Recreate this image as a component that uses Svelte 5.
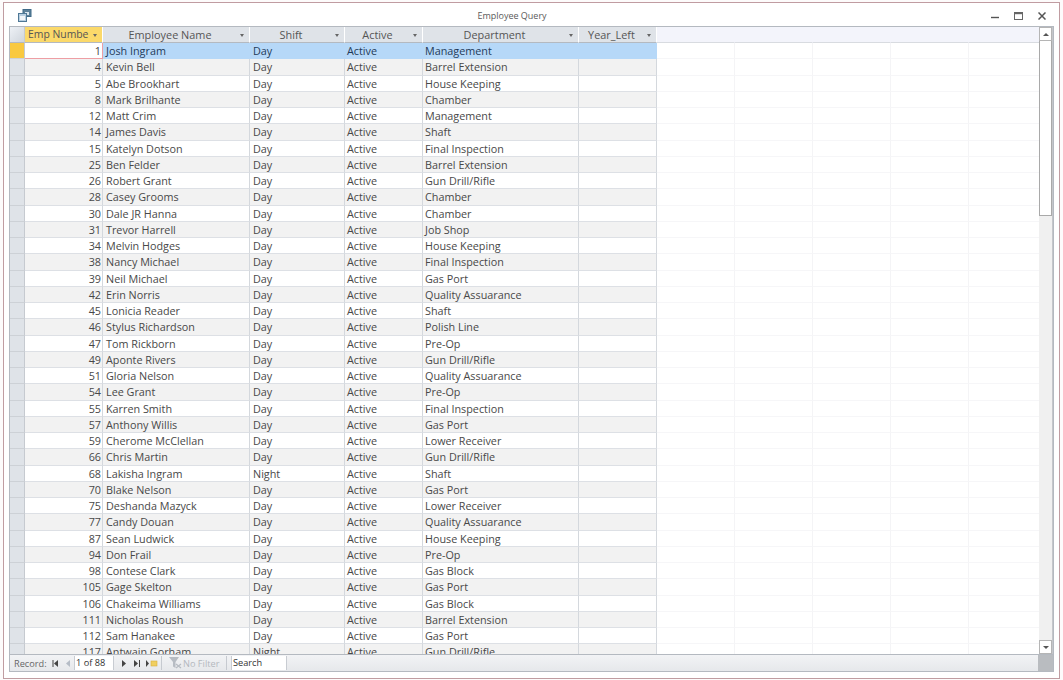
<script>
  const raw = `1|Josh Ingram|Day|Management
4|Kevin Bell|Day|Barrel Extension
5|Abe Brookhart|Day|House Keeping
8|Mark Brilhante|Day|Chamber
12|Matt Crim|Day|Management
14|James Davis|Day|Shaft
15|Katelyn Dotson|Day|Final Inspection
25|Ben Felder|Day|Barrel Extension
26|Robert Grant|Day|Gun Drill/Rifle
28|Casey Grooms|Day|Chamber
30|Dale JR Hanna|Day|Chamber
31|Trevor Harrell|Day|Job Shop
34|Melvin Hodges|Day|House Keeping
38|Nancy Michael|Day|Final Inspection
39|Neil Michael|Day|Gas Port
42|Erin Norris|Day|Quality Assuarance
45|Lonicia Reader|Day|Shaft
46|Stylus Richardson|Day|Polish Line
47|Tom Rickborn|Day|Pre-Op
49|Aponte Rivers|Day|Gun Drill/Rifle
51|Gloria Nelson|Day|Quality Assuarance
54|Lee Grant|Day|Pre-Op
55|Karren Smith|Day|Final Inspection
57|Anthony Willis|Day|Gas Port
59|Cherome McClellan|Day|Lower Receiver
66|Chris Martin|Day|Gun Drill/Rifle
68|Lakisha Ingram|Night|Shaft
70|Blake Nelson|Day|Gas Port
75|Deshanda Mazyck|Day|Lower Receiver
77|Candy Douan|Day|Quality Assuarance
87|Sean Ludwick|Day|House Keeping
94|Don Frail|Day|Pre-Op
98|Contese Clark|Day|Gas Block
105|Gage Skelton|Day|Gas Port
106|Chakeima Williams|Day|Gas Block
111|Nicholas Roush|Day|Barrel Extension
112|Sam Hanakee|Day|Gas Port
117|Antwain Gorham|Night|Gun Drill/Rifle`;
  const rows = raw.split("\n").map((l) => l.split("|"));
  const heads = ["Employee Name", "Shift", "Active", "Department"];
  const blanks = [0, 1, 2, 3, 4];
</script>

<div class="page">
  <div class="window">
    <div class="titlebar">
      <svg class="appicon" width="14" height="13" viewBox="0 0 14 13">
        <rect x="5" y="0.5" width="8" height="7" fill="#5d8199" stroke="#3f6a88" />
        <rect x="7" y="3" width="4" height="3" fill="#d9e4ec" />
        <rect x="0.5" y="4.5" width="8" height="8" fill="#b9cfe0" stroke="#4f7896" />
        <rect x="2" y="7" width="5" height="4" fill="#f2f6f9" />
      </svg>
      <span class="title">Employee Query</span>
      <div class="controls">
        <svg width="8" height="8" viewBox="0 0 8 8"><path d="M0 5.5h8" stroke="#555" stroke-width="1.4" /></svg>
        <svg width="9" height="8" viewBox="0 0 9 8"><rect x="0.5" y="0.5" width="8" height="7" fill="none" stroke="#666" /><path d="M0 1.5h9" stroke="#666" stroke-width="1.4" /></svg>
        <svg width="8" height="8" viewBox="0 0 8 8"><path d="M0.5 0.5l7 7M7.5 0.5l-7 7" stroke="#555" stroke-width="1.5" /></svg>
      </div>
    </div>

    <div class="body">
      <div class="sheet">
        <div class="grid">
          <div class="row head">
            <div class="sel corner"></div>
            <div class="c c0 active">Emp Numbe<i class="arrow"></i></div>
            {#each heads as h, i}
              <div class="c c{i + 1}"><span>{h}</span><i class="arrow"></i></div>
            {/each}
            <div class="c c5"><span>Year_Left</span><i class="arrow"></i></div>
            {#each blanks as b}<div class="blank"></div>{/each}
          </div>
          {#each rows as r, i}
            <div class="row" class:alt={i % 2 === 1} class:current={i === 0}>
              <div class="sel"></div>
              <div class="c c0 num">{r[0]}</div>
              <div class="c c1">{r[1]}</div>
              <div class="c c2">{r[2]}</div>
              <div class="c c3">Active</div>
              <div class="c c4">{r[3]}</div>
              <div class="c c5"></div>
              {#each blanks as b}<div class="blank"></div>{/each}
            </div>
          {/each}
        </div>
        <div class="scrollbar">
          <div class="sbtn"><i class="up"></i></div>
          <div class="thumb"></div>
          <div class="track"></div>
          <div class="sbtn"><i class="down"></i></div>
        </div>
      </div>
      <div class="nav">
        <span class="lbl">Record:</span>
        <svg class="nv first" width="7" height="7" viewBox="0 0 7 7"><path d="M6 0v7L2 3.5z" fill="#444" /><path d="M1 0v7" stroke="#444" /></svg>
        <svg class="nv prev" width="5" height="7" viewBox="0 0 5 7"><path d="M4 0v7L0 3.5z" fill="#b5bcc6" /></svg>
        <span class="pos">1 of 88</span>
        <svg class="nv next" width="5" height="7" viewBox="0 0 5 7"><path d="M0 0v7l4-3.5z" fill="#444" /></svg>
        <svg class="nv last" width="7" height="7" viewBox="0 0 7 7"><path d="M0 0v7l4-3.5z" fill="#444" /><path d="M5.5 0v7" stroke="#444" /></svg>
        <svg class="nv new" width="12" height="7" viewBox="0 0 12 7"><path d="M0 0v7l3-3.5z" fill="#444" /><rect x="5" y="1" width="6" height="5" fill="#f0cf60" stroke="#d8b040" stroke-width="0.6" /></svg>
        <span class="sep"></span>
        <svg class="funnel" width="15" height="12" viewBox="0 0 15 12"><path d="M1 0h10L7.5 5v6L5 9.5V5z" fill="#b7bcc3" /><path d="M8 7l5 4M13 7l-5 4" stroke="#b7bcc3" stroke-width="1.3" /></svg>
        <span class="nofilter">No Filter</span>
        <span class="sep s2"></span>
        <span class="search">Search</span>
      </div>
    </div>
  </div>
</div>

<style>
  :global(body) {
    margin: 0;
    background: #fff;
  }
  .page {
    width: 1063px;
    height: 680px;
    padding: 2px 3px 1px 3px;
    box-sizing: border-box;
    background: #fdfbfb;
    font-family: "Open Sans", "Noto Sans", sans-serif;
    font-size: 10.8px;
    color: #484848;
    overflow: hidden;
  }
  .window {
    height: 100%;
    box-sizing: border-box;
    border: 1px solid #c09ca1;
    background: #fff;
    display: flex;
    flex-direction: column;
  }
  .titlebar {
    height: 23px;
    flex: none;
    display: flex;
    align-items: center;
    position: relative;
    padding: 0 13px 0 14px;
  }
  .appicon {
    margin-top: 1px;
  }
  .title {
    position: absolute;
    left: 472px;
    width: 72px;
    text-align: center;
    font-size: 9px;
    color: #5a5a5a;
    white-space: nowrap;
    margin-top: 1px;
  }
  .controls {
    margin-left: auto;
    display: flex;
    gap: 15px;
    align-items: center;
    margin-top: 3px;
  }
  .body {
    flex: 1;
    min-height: 0;
    margin: 0 5px 6px 5px;
    display: flex;
    flex-direction: column;
    border: 1px solid #b4b9c0;
  }
  .sheet {
    flex: 1;
    min-height: 0;
    display: flex;
  }
  .grid {
    flex: 1;
    min-width: 0;
    overflow: hidden;
  }
  .row {
    display: flex;
    height: 16.25px;
    line-height: 15px;
    box-sizing: border-box;
  }
  .sel {
    width: 15px;
    flex: none;
    background: #dfe3e8;
    border-right: 1px solid #c6cad0;
    border-bottom: 1px solid #cdd1d6;
    box-sizing: border-box;
  }
  .current .sel {
    background: #f9c940;
  }
  .corner {
    background: linear-gradient(135deg, #eef1f6, #cfd5dc);
  }
  .c {
    flex: none;
    box-sizing: border-box;
    border-right: 1px solid #d4d8dd;
    border-bottom: 1px solid #dde0e5;
    padding: 0 3px 0 2px;
    white-space: nowrap;
    overflow: hidden;
    background: #fff;
  }
  .alt .c {
    background: #f2f2f2;
  }
  .c0 {
    width: 78px;
  }
  .c1 {
    width: 147px;
    padding-left: 3px;
  }
  .c2 {
    width: 95px;
    padding-left: 3px;
  }
  .c3 {
    width: 78px;
    padding-left: 2px;
  }
  .c4 {
    width: 156px;
    padding-left: 2px;
  }
  .c5 {
    width: 78px;
  }
  .num {
    text-align: right;
    padding-right: 1px;
  }
  .current .c {
    background: #b6d8f8;
    color: #1f3a58;
    border-color: #b6d8f8;
  }
  .current .c0 {
    background: #fff;
    color: #444;
    border-bottom: 1px solid #ee9ea4;
    border-right: 1px solid #ee9ea4;
  }
  .blank {
    flex: none;
    width: 78px;
    box-sizing: border-box;
    border-right: 1px solid #f4f4f6;
    border-bottom: 1px solid #f6f6f8;
    background: #fff;
  }
  .head {
    line-height: 15px;
    font-size: 10.9px;
    color: #555;
    height: 16px;
  }
  .head .sel {
    border-bottom-color: #b4b9c0;
  }
  .head .c {
    background: #dfe3e8;
    border-right: 1px solid #fff;
    border-bottom-color: #b4b9c0;
    display: flex;
    align-items: center;
    position: relative;
    justify-content: center;
    padding: 0 12px 0 0;
  }
  .head .blank {
    background: #f3f4fb;
    border-right: 1px solid #f3f4fb;
    border-bottom-color: #d8dbe0;
  }
  .head .c.active {
    background: #fbd96a;
    color: #555;
    font-size: 10.4px;
    justify-content: flex-start;
    padding-left: 3px;
  }
  .arrow {
    position: absolute;
    right: 5px;
    top: 7px;
    width: 0;
    height: 0;
    border: 2.5px solid transparent;
    border-top: 3px solid #666;
    border-bottom: 0;
  }
  .scrollbar {
    width: 13px;
    flex: none;
    display: flex;
    flex-direction: column;
    border-right: 1px solid #c4c6ca;
    background: #f0f0f0;
    box-sizing: content-box;
  }
  .sbtn {
    height: 14px;
    flex: none;
    background: #fff;
    border: 1px solid #b5b5b5;
    box-sizing: border-box;
    display: flex;
    align-items: center;
    justify-content: center;
  }
  .sbtn i {
    width: 0;
    height: 0;
    border: 3px solid transparent;
  }
  .up {
    border-top: 0 !important;
    border-bottom: 3px solid #555 !important;
  }
  .down {
    border-bottom: 0 !important;
    border-top: 3px solid #555 !important;
  }
  .thumb {
    height: 175px;
    flex: none;
    background: #fff;
    border: 1px solid #a9a9a9;
    border-top: 0;
    box-sizing: border-box;
  }
  .track {
    flex: 1;
  }
  .nav {
    flex: none;
    height: 16px;
    display: flex;
    align-items: center;
    background: linear-gradient(#f2f3f5, #e6e8eb);
    border-top: 1px solid #b4b9c0;
    font-size: 9.2px;
    color: #666;
    padding-left: 4px;
    position: relative;
  }
  .nav::after {
    content: "";
    position: absolute;
    right: 0;
    top: 0;
    bottom: 0;
    width: 15px;
    background: #b9bcc0;
  }
  .lbl {
    width: 38px;
    flex: none;
  }
  .nv {
    flex: none;
  }
  .prev {
    margin-left: 7px;
  }
  .pos {
    width: 40px;
    flex: none;
    height: 14px;
    line-height: 14px;
    background: #fff;
    border-left: 1px solid #c8ccd2;
    border-right: 1px solid #c8ccd2;
    margin-left: 3px;
    padding-left: 1px;
    box-sizing: border-box;
    color: #333;
  }
  .next {
    margin-left: 8px;
  }
  .last {
    margin-left: 7px;
  }
  .new {
    margin-left: 5px;
  }
  .sep {
    width: 1px;
    height: 14px;
    background: #c6cad0;
    margin-left: 3px;
    flex: none;
  }
  .funnel {
    margin-left: 6px;
    flex: none;
  }
  .nofilter {
    color: #b4b8be;
    white-space: nowrap;
    width: 36px;
    flex: none;
  }
  .sep.s2 {
    margin-left: 7px;
  }
  .search {
    margin-left: 4px;
    width: 56px;
    flex: none;
    box-sizing: border-box;
    height: 14px;
    line-height: 14px;
    background: #fff;
    border: 1px solid #c8ccd2;
    border-width: 0 1px;
    padding-left: 1px;
    color: #333;
  }
</style>
